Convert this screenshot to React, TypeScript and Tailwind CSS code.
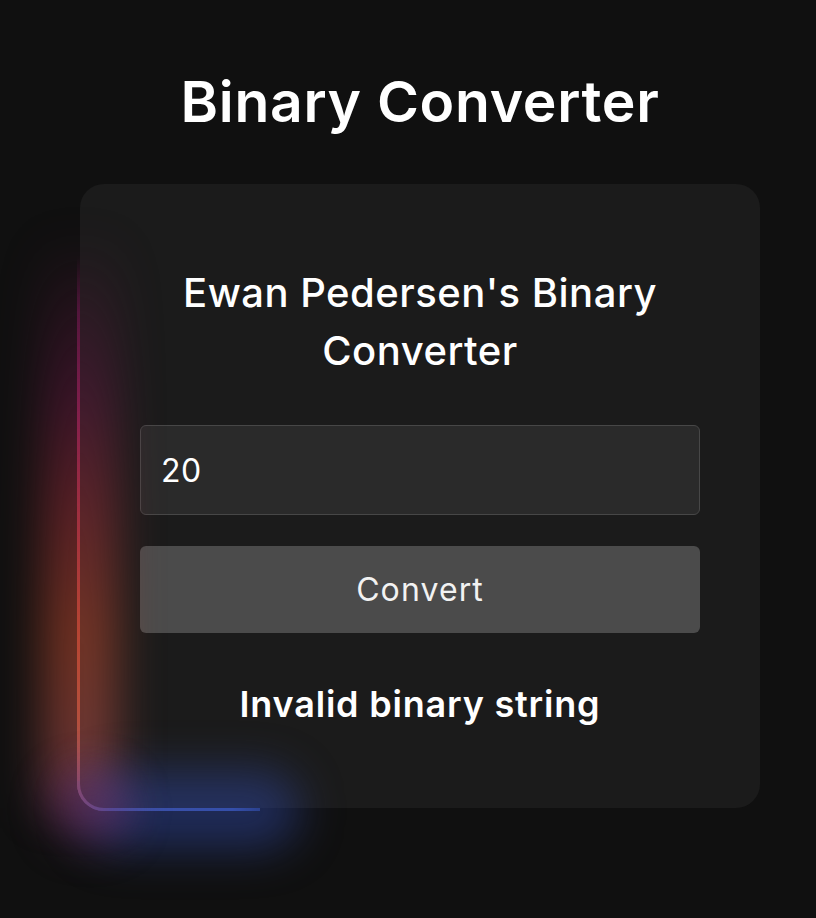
import { useState } from 'react';

export default function App() {
  const [value, setValue] = useState('20');
  const [result, setResult] = useState('Invalid binary string');

  const convert = () => {
    if (!/^[01]+$/.test(value)) {
      setResult('Invalid binary string');
      return;
    }
    setResult(`Decimal: ${parseInt(value, 2)}`);
  };

  return (
    <div className="min-h-[918px] w-full overflow-hidden bg-[#101010] pl-[24px] font-['Inter',sans-serif] text-white">
      <div className="flex flex-col items-center gap-[48px] pt-[68px]">
        <h1 className="text-[57px] leading-[68px] font-semibold tracking-[0.7px]">Binary Converter</h1>

        <div className="relative w-[680px]">
          {/* sharp gradient edge peeking out behind the card */}
          <div aria-hidden="true" className="absolute -left-[3px] top-[72px] -bottom-[3px] w-[183px] rounded-bl-[27px] overflow-hidden bg-[linear-gradient(to_bottom,transparent_0%,#4a1538_10%,#8a2250_30%,#b03448_50%,#c2463a_68%,#c4583a_84%,#9a5a70_95%,#5a5aa8_100%)]">
            <div className="absolute inset-x-0 bottom-0 h-[30px] bg-[linear-gradient(to_right,#8a5a78_0%,#4a5cb0_18%,#3c58b4_85%,#2a3f80_100%)]"></div>
          </div>

          <div className="relative flex flex-col rounded-[24px] bg-[#1b1b1b] px-[60px] pt-[80px] pb-[82px]">
            <h2 className="text-center text-[40px] leading-[58px] font-medium tracking-[0.5px]">
              Ewan Pedersen's Binary
              <br />
              Converter
            </h2>

            <input
              value={value}
              onChange={(e) => setValue(e.target.value)}
              className="mt-[45px] h-[90px] w-full rounded-[6px] border border-[#474747] bg-[#2a2a2a] pl-[20px] text-[32px] tracking-[0.5px] text-white outline-none"
            />

            <button
              onClick={convert}
              className="mt-[31px] h-[87px] w-full rounded-[6px] bg-[#4b4b4b] text-[32px] font-normal text-[#f2f2f2] tracking-[1.1px]"
            >
              Convert
            </button>

            <p className="mt-[49px] text-center text-[36px] leading-[44px] font-semibold tracking-[0.8px]">{result}</p>
          </div>

          {/* soft glow over the bottom-left corner */}
          <div aria-hidden="true" className="pointer-events-none absolute inset-0">
            <div className="absolute -left-[38px] top-[50px] bottom-[0px] w-[76px] blur-[22px] bg-[linear-gradient(to_bottom,transparent_0%,rgba(120,25,75,0.4)_28%,rgba(150,45,55,0.55)_48%,rgba(175,70,45,0.6)_70%,rgba(165,75,70,0.6)_90%,rgba(140,70,110,0.5)_100%)]"></div>
            <div className="absolute left-[0px] -bottom-[42px] h-[80px] w-[220px] rounded-full bg-[rgba(45,70,160,0.5)] blur-[22px]"></div>
            <div className="absolute -left-[30px] -bottom-[36px] h-[70px] w-[80px] rounded-full bg-[rgba(130,50,110,0.4)] blur-[20px]"></div>
          </div>
        </div>
      </div>
    </div>
  );
}
